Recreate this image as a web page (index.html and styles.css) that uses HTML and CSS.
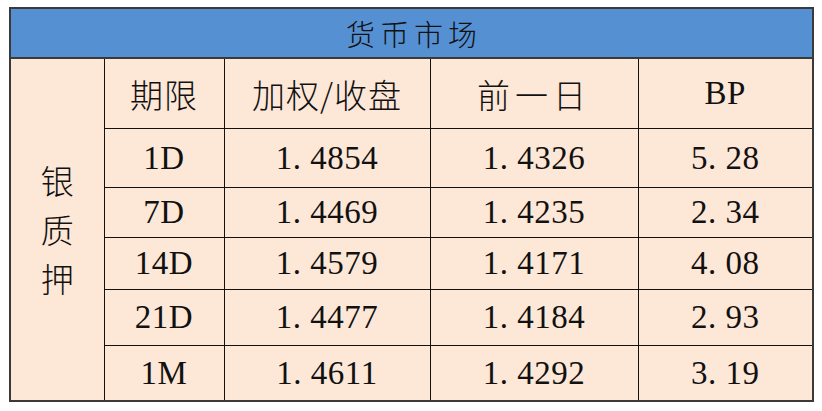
FILE: index.html
```html
<!DOCTYPE html>
<html lang="zh">
<head>
<meta charset="utf-8">
<link rel="stylesheet" href="styles.css">
</head>
<body>
<table class="mm">
  <colgroup>
    <col class="c1"><col class="c2"><col class="c3"><col class="c4"><col class="c5">
  </colgroup>
  <tr class="r-title"><th colspan="5" class="title">货币市场</th></tr>
  <tr class="r-head">
    <td rowspan="6" class="side">银<br>质<br>押</td>
    <td class="cjk">期限</td>
    <td class="cjk">加权/收盘</td>
    <td class="cjk sp">前一日</td>
    <td class="num">BP</td>
  </tr>
  <tr class="r1"><td class="num">1D</td><td class="num">1<span class="dt">.</span>4854</td><td class="num">1<span class="dt">.</span>4326</td><td class="num">5<span class="dt">.</span>28</td></tr>
  <tr class="r2"><td class="num">7D</td><td class="num">1<span class="dt">.</span>4469</td><td class="num">1<span class="dt">.</span>4235</td><td class="num">2<span class="dt">.</span>34</td></tr>
  <tr class="r3"><td class="num">14D</td><td class="num">1<span class="dt">.</span>4579</td><td class="num">1<span class="dt">.</span>4171</td><td class="num">4<span class="dt">.</span>08</td></tr>
  <tr class="r4"><td class="num">21D</td><td class="num">1<span class="dt">.</span>4477</td><td class="num">1<span class="dt">.</span>4184</td><td class="num">2<span class="dt">.</span>93</td></tr>
  <tr class="r5"><td class="num">1M</td><td class="num">1<span class="dt">.</span>4611</td><td class="num">1<span class="dt">.</span>4292</td><td class="num">3<span class="dt">.</span>19</td></tr>
</table>
</body>
</html>
```
FILE: styles.css
```css
html, body { background: #ffffff; }
body { margin: 7px 0 0 9px; }

.mm {
  border-collapse: collapse;
  table-layout: fixed;
  width: 803px;
  border: 2px solid #3a3a3a;
  background: #fde7d7;
  color: #111;
}
.c1 { width: 94px; }
.c2 { width: 120px; }
.c3 { width: 206px; }
.c4 { width: 208px; }
.c5 { width: 175px; }

.mm td, .mm th {
  border: 1.5px solid #111;
  padding: 0;
  text-align: center;
  vertical-align: middle;
}
.mm th.title {
  background: #5590d3;
  border: 2px solid #3a3a3a;
  height: 48px;
  font-family: "Noto Sans CJK SC", sans-serif;
  font-weight: 300;
  font-size: 29px;
  letter-spacing: 5px;
  padding-left: 5px;
  color: #111;
}
.r-head td { height: 69px; }
.r1 td { height: 58px; }
.r2 td { height: 49px; }
.r3 td { height: 51px; }
.r4 td { height: 55px; }
.r5 td { height: 54px; }

.cjk {
  font-family: "Noto Sans CJK SC", sans-serif;
  font-size: 33px;
  font-weight: 300;
  letter-spacing: 1px;
}
.sp { letter-spacing: 5px; padding-left: 5px; }
.side {
  font-family: "Noto Sans CJK SC", sans-serif;
  font-size: 33px;
  font-weight: 300;
  line-height: 49px;
  padding-bottom: 6px;
}
.num {
  font-family: "Liberation Serif", "Times New Roman", serif;
  font-size: 33px;
  letter-spacing: 0.5px;
}
.dt { letter-spacing: 0.28em; }
```
